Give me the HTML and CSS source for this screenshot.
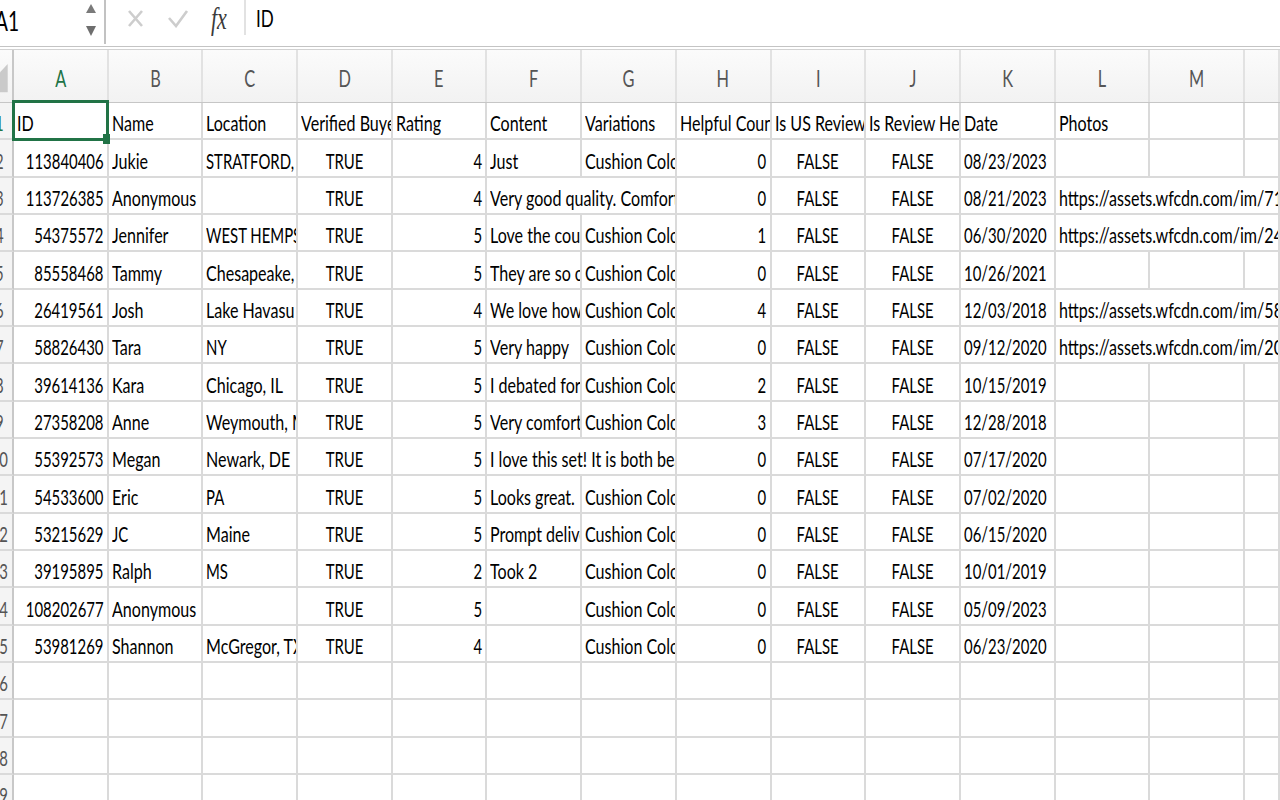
FILE: index.html
```html
<!DOCTYPE html>
<html lang="en">
<head>
    <meta charset="UTF-8">
    <meta name="viewport" content="width=device-width, initial-scale=1.0">
    <title>Reviews - Sheet1</title>
    <link rel="stylesheet" href="styles.css">
</head>
<body>
    <!-- formula bar -->
    <div class="formula-bar">
        <div class="name-box">
            <span class="sq name">A1</span>
            <svg class="spin" width="12" height="36" viewBox="0 0 12 36">
                <polygon points="1,10 6,1 11,10" fill="#7a7a7a"/>
                <polygon points="1,23 11,23 6,33" fill="#6e6e6e"/>
            </svg>
        </div>
        <svg class="tool cancel" width="17" height="19" viewBox="0 0 17 19">
            <path d="M2 2 L15 17 M15 2 L2 17" stroke="#cdcdcd" stroke-width="2.6" fill="none"/>
        </svg>
        <svg class="tool enter" width="22" height="19" viewBox="0 0 22 19">
            <path d="M2 9 L9 17 L20 2" stroke="#cdcdcd" stroke-width="2.6" fill="none"/>
        </svg>
        <span class="sq fx">fx</span>
        <div class="formula"><span class="sq">ID</span></div>
    </div>

    <div class="sheet">
        <div class="row head">
            <div class="c corner">
                <svg width="14" height="52" viewBox="0 0 14 52"><polygon points="9,12 9,45 -22,45" fill="#cacaca"/></svg>
            </div>
            <div class="c sel-col"><span>A</span></div>
            <div class="c"><span>B</span></div>
            <div class="c"><span>C</span></div>
            <div class="c"><span>D</span></div>
            <div class="c"><span>E</span></div>
            <div class="c"><span>F</span></div>
            <div class="c"><span>G</span></div>
            <div class="c"><span>H</span></div>
            <div class="c"><span>I</span></div>
            <div class="c"><span>J</span></div>
            <div class="c"><span>K</span></div>
            <div class="c"><span>L</span></div>
            <div class="c"><span>M</span></div>
            <div class="c"></div>
        </div>

        <div class="row">
            <div class="c rh sel-row"><span>1</span></div>
            <div class="c sel"><span>ID</span></div>
            <div class="c"><span>Name</span></div>
            <div class="c"><span>Location</span></div>
            <div class="c"><span>Verified Buyer</span></div>
            <div class="c"><span>Rating</span></div>
            <div class="c"><span>Content</span></div>
            <div class="c"><span>Variations</span></div>
            <div class="c"><span>Helpful Count</span></div>
            <div class="c"><span>Is US Review</span></div>
            <div class="c"><span>Is Review Helpful</span></div>
            <div class="c"><span>Date</span></div>
            <div class="c"><span>Photos</span></div>
            <div class="c"></div>
            <div class="c"></div>
        </div>

        <div class="row">
            <div class="c rh"><span>2</span></div>
            <div class="c r"><span>113840406</span></div>
            <div class="c"><span>Jukie</span></div>
            <div class="c d"><span>STRATFORD, CT</span></div>
            <div class="c m"><span>TRUE</span></div>
            <div class="c r"><span>4</span></div>
            <div class="c"><span>Just</span></div>
            <div class="c"><span>Cushion Color: Gray</span></div>
            <div class="c r"><span>0</span></div>
            <div class="c m"><span>FALSE</span></div>
            <div class="c m"><span>FALSE</span></div>
            <div class="c d"><span>08/23/2023</span></div>
            <div class="c"></div>
            <div class="c"></div>
            <div class="c"></div>
        </div>

        <div class="row">
            <div class="c rh"><span>3</span></div>
            <div class="c r"><span>113726385</span></div>
            <div class="c"><span>Anonymous</span></div>
            <div class="c"></div>
            <div class="c m"><span>TRUE</span></div>
            <div class="c r"><span>4</span></div>
            <div class="c span2"><span>Very good quality. Comfortable and stylish.</span></div>
            <div class="c r"><span>0</span></div>
            <div class="c m"><span>FALSE</span></div>
            <div class="c m"><span>FALSE</span></div>
            <div class="c d"><span>08/21/2023</span></div>
            <div class="c span3"><span>https://assets.wfcdn.com/im/71482903/resize-h800-w800%5Ecompr-r85/2492/249245551/default_name.jpg</span></div>
        </div>

        <div class="row">
            <div class="c rh"><span>4</span></div>
            <div class="c r"><span>54375572</span></div>
            <div class="c"><span>Jennifer</span></div>
            <div class="c d"><span>WEST HEMPSTEAD, NY</span></div>
            <div class="c m"><span>TRUE</span></div>
            <div class="c r"><span>5</span></div>
            <div class="c"><span>Love the couch set</span></div>
            <div class="c"><span>Cushion Color: Gray</span></div>
            <div class="c r"><span>1</span></div>
            <div class="c m"><span>FALSE</span></div>
            <div class="c m"><span>FALSE</span></div>
            <div class="c d"><span>06/30/2020</span></div>
            <div class="c span3"><span>https://assets.wfcdn.com/im/24690150/resize-h800-w800%5Ecompr-r85/1180/118003422/default_name.jpg</span></div>
        </div>

        <div class="row">
            <div class="c rh"><span>5</span></div>
            <div class="c r"><span>85558468</span></div>
            <div class="c"><span>Tammy</span></div>
            <div class="c"><span>Chesapeake, VA</span></div>
            <div class="c m"><span>TRUE</span></div>
            <div class="c r"><span>5</span></div>
            <div class="c"><span>They are so comfortable</span></div>
            <div class="c"><span>Cushion Color: Gray</span></div>
            <div class="c r"><span>0</span></div>
            <div class="c m"><span>FALSE</span></div>
            <div class="c m"><span>FALSE</span></div>
            <div class="c d"><span>10/26/2021</span></div>
            <div class="c"></div>
            <div class="c"></div>
            <div class="c"></div>
        </div>

        <div class="row">
            <div class="c rh"><span>6</span></div>
            <div class="c r"><span>26419561</span></div>
            <div class="c"><span>Josh</span></div>
            <div class="c"><span>Lake Havasu City, AZ</span></div>
            <div class="c m"><span>TRUE</span></div>
            <div class="c r"><span>4</span></div>
            <div class="c"><span>We love how it looks</span></div>
            <div class="c"><span>Cushion Color: Gray</span></div>
            <div class="c r"><span>4</span></div>
            <div class="c m"><span>FALSE</span></div>
            <div class="c m"><span>FALSE</span></div>
            <div class="c d"><span>12/03/2018</span></div>
            <div class="c span3"><span>https://assets.wfcdn.com/im/58063318/resize-h800-w800%5Ecompr-r85/6350/63502417/default_name.jpg</span></div>
        </div>

        <div class="row">
            <div class="c rh"><span>7</span></div>
            <div class="c r"><span>58826430</span></div>
            <div class="c"><span>Tara</span></div>
            <div class="c d"><span>NY</span></div>
            <div class="c m"><span>TRUE</span></div>
            <div class="c r"><span>5</span></div>
            <div class="c"><span>Very happy</span></div>
            <div class="c"><span>Cushion Color: Gray</span></div>
            <div class="c r"><span>0</span></div>
            <div class="c m"><span>FALSE</span></div>
            <div class="c m"><span>FALSE</span></div>
            <div class="c d"><span>09/12/2020</span></div>
            <div class="c span3"><span>https://assets.wfcdn.com/im/20871694/resize-h800-w800%5Ecompr-r85/1107/110740118/default_name.jpg</span></div>
        </div>

        <div class="row">
            <div class="c rh"><span>8</span></div>
            <div class="c r"><span>39614136</span></div>
            <div class="c"><span>Kara</span></div>
            <div class="c"><span>Chicago, IL</span></div>
            <div class="c m"><span>TRUE</span></div>
            <div class="c r"><span>5</span></div>
            <div class="c"><span>I debated for weeks</span></div>
            <div class="c"><span>Cushion Color: Gray</span></div>
            <div class="c r"><span>2</span></div>
            <div class="c m"><span>FALSE</span></div>
            <div class="c m"><span>FALSE</span></div>
            <div class="c d"><span>10/15/2019</span></div>
            <div class="c"></div>
            <div class="c"></div>
            <div class="c"></div>
        </div>

        <div class="row">
            <div class="c rh"><span>9</span></div>
            <div class="c r"><span>27358208</span></div>
            <div class="c"><span>Anne</span></div>
            <div class="c"><span>Weymouth, MA</span></div>
            <div class="c m"><span>TRUE</span></div>
            <div class="c r"><span>5</span></div>
            <div class="c"><span>Very comfortable</span></div>
            <div class="c"><span>Cushion Color: Gray</span></div>
            <div class="c r"><span>3</span></div>
            <div class="c m"><span>FALSE</span></div>
            <div class="c m"><span>FALSE</span></div>
            <div class="c d"><span>12/28/2018</span></div>
            <div class="c"></div>
            <div class="c"></div>
            <div class="c"></div>
        </div>

        <div class="row">
            <div class="c rh"><span>10</span></div>
            <div class="c r"><span>55392573</span></div>
            <div class="c"><span>Megan</span></div>
            <div class="c"><span>Newark, DE</span></div>
            <div class="c m"><span>TRUE</span></div>
            <div class="c r"><span>5</span></div>
            <div class="c span2"><span>I love this set! It is both beautiful and comfortable.</span></div>
            <div class="c r"><span>0</span></div>
            <div class="c m"><span>FALSE</span></div>
            <div class="c m"><span>FALSE</span></div>
            <div class="c d"><span>07/17/2020</span></div>
            <div class="c"></div>
            <div class="c"></div>
            <div class="c"></div>
        </div>

        <div class="row">
            <div class="c rh"><span>11</span></div>
            <div class="c r"><span>54533600</span></div>
            <div class="c"><span>Eric</span></div>
            <div class="c d"><span>PA</span></div>
            <div class="c m"><span>TRUE</span></div>
            <div class="c r"><span>5</span></div>
            <div class="c"><span>Looks great.</span></div>
            <div class="c"><span>Cushion Color: Gray</span></div>
            <div class="c r"><span>0</span></div>
            <div class="c m"><span>FALSE</span></div>
            <div class="c m"><span>FALSE</span></div>
            <div class="c d"><span>07/02/2020</span></div>
            <div class="c"></div>
            <div class="c"></div>
            <div class="c"></div>
        </div>

        <div class="row">
            <div class="c rh"><span>12</span></div>
            <div class="c r"><span>53215629</span></div>
            <div class="c d"><span>JC</span></div>
            <div class="c"><span>Maine</span></div>
            <div class="c m"><span>TRUE</span></div>
            <div class="c r"><span>5</span></div>
            <div class="c"><span>Prompt delivery</span></div>
            <div class="c"><span>Cushion Color: Gray</span></div>
            <div class="c r"><span>0</span></div>
            <div class="c m"><span>FALSE</span></div>
            <div class="c m"><span>FALSE</span></div>
            <div class="c d"><span>06/15/2020</span></div>
            <div class="c"></div>
            <div class="c"></div>
            <div class="c"></div>
        </div>

        <div class="row">
            <div class="c rh"><span>13</span></div>
            <div class="c r"><span>39195895</span></div>
            <div class="c"><span>Ralph</span></div>
            <div class="c d"><span>MS</span></div>
            <div class="c m"><span>TRUE</span></div>
            <div class="c r"><span>2</span></div>
            <div class="c"><span>Took 2</span></div>
            <div class="c"><span>Cushion Color: Gray</span></div>
            <div class="c r"><span>0</span></div>
            <div class="c m"><span>FALSE</span></div>
            <div class="c m"><span>FALSE</span></div>
            <div class="c d"><span>10/01/2019</span></div>
            <div class="c"></div>
            <div class="c"></div>
            <div class="c"></div>
        </div>

        <div class="row">
            <div class="c rh"><span>14</span></div>
            <div class="c r"><span>108202677</span></div>
            <div class="c"><span>Anonymous</span></div>
            <div class="c"></div>
            <div class="c m"><span>TRUE</span></div>
            <div class="c r"><span>5</span></div>
            <div class="c"></div>
            <div class="c"><span>Cushion Color: Gray</span></div>
            <div class="c r"><span>0</span></div>
            <div class="c m"><span>FALSE</span></div>
            <div class="c m"><span>FALSE</span></div>
            <div class="c d"><span>05/09/2023</span></div>
            <div class="c"></div>
            <div class="c"></div>
            <div class="c"></div>
        </div>

        <div class="row">
            <div class="c rh"><span>15</span></div>
            <div class="c r"><span>53981269</span></div>
            <div class="c"><span>Shannon</span></div>
            <div class="c"><span>McGregor, TX</span></div>
            <div class="c m"><span>TRUE</span></div>
            <div class="c r"><span>4</span></div>
            <div class="c"></div>
            <div class="c"><span>Cushion Color: Gray</span></div>
            <div class="c r"><span>0</span></div>
            <div class="c m"><span>FALSE</span></div>
            <div class="c m"><span>FALSE</span></div>
            <div class="c d"><span>06/23/2020</span></div>
            <div class="c"></div>
            <div class="c"></div>
            <div class="c"></div>
        </div>

        <div class="row">
            <div class="c rh"><span>16</span></div>
            <div class="c"></div><div class="c"></div><div class="c"></div><div class="c"></div>
            <div class="c"></div><div class="c"></div><div class="c"></div><div class="c"></div>
            <div class="c"></div><div class="c"></div><div class="c"></div><div class="c"></div>
            <div class="c"></div><div class="c"></div>
        </div>
        <div class="row">
            <div class="c rh"><span>17</span></div>
            <div class="c"></div><div class="c"></div><div class="c"></div><div class="c"></div>
            <div class="c"></div><div class="c"></div><div class="c"></div><div class="c"></div>
            <div class="c"></div><div class="c"></div><div class="c"></div><div class="c"></div>
            <div class="c"></div><div class="c"></div>
        </div>
        <div class="row">
            <div class="c rh"><span>18</span></div>
            <div class="c"></div><div class="c"></div><div class="c"></div><div class="c"></div>
            <div class="c"></div><div class="c"></div><div class="c"></div><div class="c"></div>
            <div class="c"></div><div class="c"></div><div class="c"></div><div class="c"></div>
            <div class="c"></div><div class="c"></div>
        </div>
        <div class="row">
            <div class="c rh"><span>19</span></div>
            <div class="c"></div><div class="c"></div><div class="c"></div><div class="c"></div>
            <div class="c"></div><div class="c"></div><div class="c"></div><div class="c"></div>
            <div class="c"></div><div class="c"></div><div class="c"></div><div class="c"></div>
            <div class="c"></div><div class="c"></div>
        </div>
    </div>
</body>
</html>
```

FILE: styles.css
```css
* {
    margin: 0;
    padding: 0;
    box-sizing: border-box;
}

:root {
    --sx: 0.71;     /* digits and capitals */
    --sx-text: 0.765; /* running text */
    --line: #dadada;
    --green: #217346;
}

body {
    font-family: Lato, 'Open Sans', sans-serif;
    background: #fff;
    color: #000;
    width: 1280px;
    height: 800px;
    overflow: hidden;
}

/* text in the sheet is squeezed horizontally */
.sq {
    display: inline-block;
    white-space: nowrap;
    transform: scaleX(var(--sx));
    transform-origin: left center;
}

/* ---------- formula bar ---------- */

.formula-bar {
    display: flex;
    align-items: flex-start;
    height: 47px;
    border-bottom: 1px solid #c4c4c4;
    margin-bottom: 2px;
}

.name-box {
    display: flex;
    align-items: center;
    justify-content: space-between;
    width: 106px;
    height: 44px;
    padding-right: 7px;
    border-right: 2px solid #c2c2c2;
}

.name {
    font-size: 27px;
    margin-left: -5px;
    margin-top: -4px;
}

.spin {
    margin-top: -2px;
}

.tool {
    margin-top: 9px;
}

.cancel {
    margin-left: 21px;
}

.enter {
    margin-left: 23px;
}

.fx {
    font-family: 'Liberation Serif', serif;
    font-style: italic;
    font-size: 31px;
    color: #3a3a3a;
    margin-left: 22px;
    margin-top: 1px;
    width: 33px;
}

.formula {
    height: 35px;
    border-left: 2px solid #e2e2e2;
    padding-left: 10px;
    display: flex;
    align-items: center;
    font-size: 24px;
}

/* ---------- grid ---------- */

.row {
    display: grid;
    grid-template-columns: 14px repeat(13, 94.7px) 1fr;
    height: 37.33px;
}

.c {
    display: flex;
    align-items: flex-end;
    justify-content: flex-start;
    padding: 0 3px 5px;
    border-right: 2px solid var(--line);
    border-bottom: 2px solid var(--line);
    overflow: hidden;
    white-space: nowrap;
    font-size: 21px;
    line-height: 21px;
}

.c span {
    flex: none;
    display: block;
    transform: scaleX(var(--sx-text));
    transform-origin: left center;
}

.c.r,
.c.m,
.c.d {
    --sx-text: var(--sx);
}

.c.r {
    justify-content: flex-end;
}

.c.r span {
    transform-origin: right center;
}

.c.m {
    justify-content: center;
}

.c.m span {
    transform-origin: center;
}

.span2 {
    grid-column: span 2;
}

.span3 {
    grid-column: span 3;
}

/* column letters */
.head {
    height: 54px;
    border-top: 1px solid #d2d2d2;
    border-bottom: 1px solid #c6c6c6;
    background: linear-gradient(#fbfbfb, #f2f2f2);
}

.head .c {
    --sx-text: var(--sx);
    align-items: center;
    justify-content: center;
    padding: 4px 0 0;
    border-bottom: none;
    border-right-color: #e2e2e2;
    font-size: 23px;
    color: #555;
}

.head .c span {
    transform-origin: center;
}

.head .corner {
    padding: 0;
    border-right: 2px solid #c8c8c8;
    align-items: stretch;
}

.head .sel-col {
    color: var(--green);
}

/* row numbers */
.rh {
    --sx-text: var(--sx);
    justify-content: flex-end;
    padding: 0 0 5px;
    background: #f4f4f4;
    border-right-color: #c8c8c8;
    color: #555;
}

.rh span {
    width: 36px;
    text-align: center;
    transform-origin: right center;
}

.rh.sel-row {
    color: var(--green);
}

/* active cell */
.sel {
    position: relative;
    overflow: visible;
}

.sel::after {
    content: '';
    position: absolute;
    left: -2px;
    top: -3px;
    right: -2px;
    bottom: -3px;
    border: 3px solid var(--green);
    z-index: 2;
}

.sel::before {
    content: '';
    position: absolute;
    right: -3px;
    bottom: -6px;
    width: 7px;
    height: 10px;
    background: var(--green);
    z-index: 3;
}
```
